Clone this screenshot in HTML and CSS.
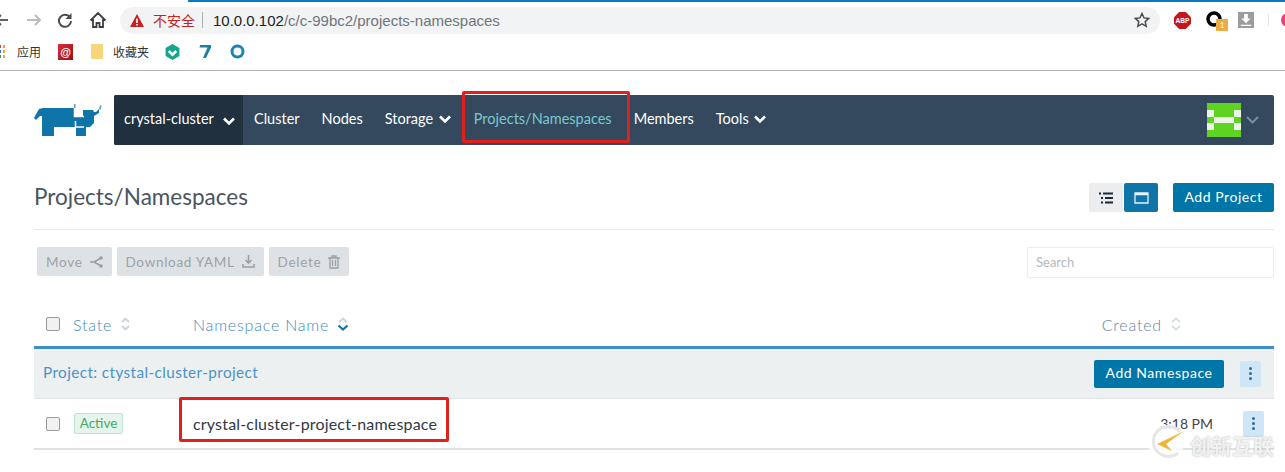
FILE: index.html
```html
<!DOCTYPE html>
<html lang="zh">
<head>
<meta charset="utf-8">
<title>Projects/Namespaces</title>
<link rel="stylesheet" href="styles.css">
</head>
<body>
<div class="loadbar"></div>
<header class="chrome">
  <div class="toolbar">
    <svg class="tb-back" width="8" height="16" viewBox="0 0 8 16"><path d="M-2 8H8M1 3l-5 5 5 5" fill="none" stroke="#5f6368" stroke-width="2"/></svg>
    <svg class="tb-fwd" width="16" height="16" viewBox="0 0 16 16"><path d="M1 8h13M9 3l5 5-5 5" fill="none" stroke="#b9bcc0" stroke-width="2"/></svg>
    <svg class="tb-reload" width="16" height="16" viewBox="0 0 16 16"><path d="M13 5.500A6 6 0 1 0 14 9" fill="none" stroke="#4a4d50" stroke-width="2"/><path d="M14.500 1v6h-6z" fill="#4a4d50"/></svg>
    <svg class="tb-home" width="18" height="18" viewBox="0 0 18 18"><path d="M1.500 9.500 9 2l7.500 7.500M4 8v8h3.500v-4h3v4H14V8" fill="none" stroke="#3c3f42" stroke-width="1.800"/></svg>
    <div class="omnibox">
      <svg class="warn" width="14" height="13" viewBox="0 0 14 13"><path d="M7 0l7 13H0z" fill="#c5221f"/><path d="M6.200 4.500h1.600v4.500H6.200zM6.200 10h1.600v1.500H6.200z" fill="#fff"/></svg>
      <span class="insecure">不安全</span>
      <span class="omni-sep"></span>
      <span class="url"><b>10.0.0.102</b>/c/c-99bc2/projects-namespaces</span>
      <svg class="star" width="16" height="16" viewBox="0 0 16 16"><path d="M8 1.500l2 4.400 4.800.5-3.600 3.200 1 4.700L8 11.900l-4.200 2.400 1-4.700L1.200 6.400 6 5.900z" fill="none" stroke="#4a4d50" stroke-width="1.500"/></svg>
    </div>
    <div class="ext">
      <svg width="17" height="17" viewBox="0 0 18 18"><path d="M5.500 0h7L18 5.500v7L12.500 18h-7L0 12.500v-7z" fill="#c4161c"/><text x="9" y="11.500" class="abp">ABP</text></svg>
      <div class="ext-o"><svg width="18" height="18" viewBox="0 0 18 18"><circle cx="8" cy="8" r="6" fill="none" stroke="#000" stroke-width="3.500"/></svg><span class="ext-badge">1</span></div>
      <svg width="16" height="16" viewBox="0 0 17 17"><rect width="17" height="17" fill="#9c9c9c"/><path d="M6.500 2h4v5h3l-5 5-5-5h3zM3 13.500h11V15H3z" fill="#fff"/></svg>
      <span class="ext-sep"></span>
      <span class="profile"></span>
    </div>
  </div>
  <div class="bookmarks">
    <span class="apps"><i></i><i></i><i></i><i></i><i></i><i></i></span>
    <span class="bm-label bm-apps">应用</span>
    <span class="bm-mail">@</span>
    <span class="bm-folder"></span>
    <span class="bm-label bm-fav">收藏夹</span>
    <svg class="bm-hex" width="15" height="16" viewBox="0 0 14 15"><path d="M7 0l6.500 3.700v7.600L7 15 .5 11.300V3.700z" fill="#15a589"/><path d="M3.500 6.500 7 10l3.500-3.500" fill="none" stroke="#fff" stroke-width="2.500"/></svg>
    <svg class="bm-seven" width="14" height="15" viewBox="0 0 14 15"><path d="M2 1h11v2.500L8 14H5l4.500-10.500H1.500z" fill="#1d7fa8"/></svg>
    <svg class="bm-ring" width="15" height="15" viewBox="0 0 15 15"><circle cx="7.500" cy="7.500" r="5.500" fill="none" stroke="#1c82ba" stroke-width="3"/></svg>
  </div>
</header>

<main class="page">
  <nav class="topnav">
    <svg class="logo" width="70" height="34" viewBox="0 0 70 34">
      <path d="M9 5H41V13H49V7H59L60 9H62L65 6V10L60 13V20L56 24H52V33H42V24H20V33H8V13H6L2 17 0 15 5 6Z" fill="#0f75a8"/>
      <path d="M40.500 0V13.500H50M41.500 18V24H50" fill="none" stroke="#fff" stroke-width="1.500"/>
      <path d="M40 1h1.500v4H40zM66 2l1.500 1-1 4-1.500-1z" fill="#5f9dbf"/>
    </svg>
    <div class="navbar">
      <div class="cluster">crystal-cluster <svg class="chev" width="14" height="9" viewBox="0 0 14 9"><path d="M2 1.500 7 6.500l5-5" fill="none" stroke="#fff" stroke-width="2.600"/></svg></div>
      <a class="navlink nl-cluster">Cluster</a>
      <a class="navlink">Nodes</a>
      <a class="navlink">Storage <svg class="chev" width="14" height="9" viewBox="0 0 14 9"><path d="M2 1.500 7 6.500l5-5" fill="none" stroke="#fff" stroke-width="2.600"/></svg></a>
      <a class="navlink active">Projects/Namespaces</a>
      <a class="navlink">Members</a>
      <a class="navlink">Tools <svg class="chev" width="14" height="9" viewBox="0 0 14 9"><path d="M2 1.500 7 6.500l5-5" fill="none" stroke="#fff" stroke-width="2.600"/></svg></a>
      <div class="user">
        <svg class="avatar" width="34" height="34" viewBox="0 0 34 34" shape-rendering="crispEdges"><rect width="34" height="34" fill="#5fd321"/><path d="M0 7h7v7H0zM27 7h7v7h-7zM0 20h7v7H0zM27 20h7v7h-7zM7 14h20v6H7z" fill="#eef3ea"/></svg>
        <svg width="13" height="8" viewBox="0 0 13 8"><path d="M1 1l5.500 5.500L12 1" fill="none" stroke="#7c8ba0" stroke-width="2"/></svg>
      </div>
    </div>
  </nav>

  <section class="titlebar">
    <h1>Projects/Namespaces</h1>
    <div class="title-actions">
      <div class="toggle">
        <span class="tg tg-off"><svg width="14" height="12" viewBox="0 0 14 12"><path d="M0 1.500h2M4 1.500h10M2 6h2M6 6h8M2 10.500h2M6 10.500h8" stroke="#1d2a36" stroke-width="2"/></svg></span>
        <span class="tg tg-on"><svg width="15" height="12" viewBox="0 0 15 12"><path d="M1 1h13v10H1zM1 2.500h13" fill="none" stroke="#e8f2f8" stroke-width="1.300"/></svg></span>
      </div>
      <button class="btn btn-primary">Add Project</button>
    </div>
  </section>

  <section class="actions">
    <div class="bulk">
      <button class="btn-dis">Move <svg width="13" height="12" viewBox="0 0 13 12"><path d="M0 6h5M4 6l7-4M4 6l7 4" fill="none" stroke="#96a0a7" stroke-width="1.500"/><circle cx="11" cy="2" r="1.800" fill="#96a0a7"/><circle cx="11" cy="10" r="1.800" fill="#96a0a7"/></svg></button>
      <button class="btn-dis">Download YAML <svg width="13" height="13" viewBox="0 0 13 13"><path d="M6.500 0v7M3.500 5l3 3 3-3M1 9v3h11V9" fill="none" stroke="#96a0a7" stroke-width="1.600"/></svg></button>
      <button class="btn-dis">Delete <svg width="12" height="14" viewBox="0 0 12 14"><path d="M0 3h12M4 3V1h4v2M2 3v10h8V3M4.500 5v6M7.500 5v6" fill="none" stroke="#96a0a7" stroke-width="1.300"/></svg></button>
    </div>
    <input class="search" type="text" placeholder="Search">
  </section>

  <section class="table">
    <div class="thead">
      <span class="check"></span>
      <span class="th th-state">State <svg class="sort" width="11" height="14" viewBox="0 0 11 14"><path d="M2 5 5.500 1.500 9 5M2 9 5.500 12.500 9 9" fill="none" stroke="#c6d5de" stroke-width="1.800"/></svg></span>
      <span class="th th-name">Namespace Name <svg class="sort" width="12" height="14" viewBox="0 0 12 14"><path d="M2.500 5 6 1.500 9.500 5" fill="none" stroke="#c6d5de" stroke-width="1.800"/><path d="M1.500 8.500 6 12.500l4.500-4" fill="none" stroke="#0f75a8" stroke-width="2.200"/></svg></span>
      <span class="th th-created">Created <svg class="sort" width="12" height="14" viewBox="0 0 12 14"><path d="M2 5 6 1.500 10 5M2 9 6 12.500 10 9" fill="none" stroke="#d5dde2" stroke-width="1.800"/></svg></span>
    </div>
    <div class="group">
      <span class="group-name">Project: ctystal-cluster-project</span>
      <button class="btn btn-small">Add Namespace</button>
      <span class="kebab kebab-group"><i></i><i></i><i></i></span>
    </div>
    <div class="row">
      <span class="check"></span>
      <span class="badge">Active</span>
      <span class="ns-name">crystal-cluster-project-namespace</span>
      <span class="time">3:18 PM</span>
      <span class="kebab kebab-row"><i></i><i></i><i></i></span>
    </div>
  </section>
</main>

<div class="mark mark-nav"></div>
<div class="mark mark-ns"></div>
<div class="watermark">
  <svg width="40" height="40" viewBox="0 0 40 40"><circle cx="18" cy="20" r="18" fill="#fff" fill-opacity=".75"/><path d="M32 9A15 15 0 1 0 30 30" fill="none" stroke="#e6e6e6" stroke-width="3"/><path d="M36 8 9 21l15 7-6-7z" fill="#f2b632"/></svg>
  <span class="wm-text">创新互联</span>
</div>
</body>
</html>
```
FILE: styles.css
```css
* { box-sizing: border-box; }
html, body { margin: 0; height: 472px; overflow: hidden; }
body { background: #fff; font-family: Lato, "Noto Sans CJK SC", sans-serif; color: #2e3a45; position: relative; }

.loadbar { position: absolute; top: 0; left: 188px; right: 0; height: 2px; background: #0b78c2; }

.chrome { height: 71px; border-bottom: 1px solid #b4b4b4; background: #fff; }
.toolbar { height: 36px; padding-top: 4px; display: flex; align-items: center; overflow: hidden; }
.tb-back { flex: none; margin-right: 18px; }
.tb-fwd { flex: none; margin-right: 15px; }
.tb-reload { flex: none; margin-right: 16px; }
.tb-home { flex: none; margin-right: 13px; }
.omnibox { flex: none; width: 1040px; height: 27px; padding: 0 10px; border-radius: 14px; background: #f1f3f4; display: flex; align-items: center; }
.warn { flex: none; }
.insecure { margin-left: 9px; font-size: 14px; color: #c5221f; }
.omni-sep { width: 1px; height: 16px; margin: 0 10px 0 7px; background: #a9adb1; }
.url { font-family: "Liberation Sans", sans-serif; font-size: 15px; color: #70757a; }
.url b { font-weight: 400; color: #202124; }
.star { margin-left: auto; }
.ext { flex: none; margin-left: 14px; display: flex; align-items: center; }
.ext > svg { flex: none; }
.abp { font: 700 7px "Liberation Sans", sans-serif; fill: #fff; text-anchor: middle; }
.ext-o { position: relative; flex: none; width: 18px; height: 18px; margin: 0 14px 0 15px; }
.ext-badge { position: absolute; left: 10px; top: 8px; width: 12px; height: 12px; background: #eeaa45; color: #fff; font-size: 8px; line-height: 12px; text-align: center; }
.ext-sep { flex: none; width: 1px; height: 12px; margin-left: 14px; background: #e4e4e4; }
.profile { flex: none; width: 14px; height: 14px; margin-left: 12px; border-radius: 50%; background: #e0457b; }

.bookmarks { height: 34px; padding-bottom: 3px; display: flex; align-items: center; }
.apps { width: 6px; display: grid; grid-template-columns: 2px 2px; gap: 2px; margin-right: 12px; margin-left: -1px; }
.apps i { width: 2px; height: 3px; background: #e8a33a; }
.apps i:nth-child(1) { background: #d9443a; }
.apps i:nth-child(3) { background: #3b78d8; }
.apps i:nth-child(5) { background: #3a9a4d; }
.bm-label { font-size: 12px; color: #333; }
.bm-mail { margin-left: 17px; width: 15px; height: 16px; background: linear-gradient(135deg, #d8303a, #981018); color: #fff; font: 700 11px/16px "Liberation Sans", sans-serif; text-align: center; }
.bm-folder { margin-left: 18px; width: 12px; height: 15px; border-radius: 1px; background: #f6d67a; }
.bm-fav { margin-left: 10px; }
.bm-hex { margin-left: 16px; }
.bm-seven { margin-left: 18px; }
.bm-ring { margin-left: 18px; }

.page { padding: 24px 11px 0 34px; }

.topnav { display: flex; align-items: center; height: 50px; }
.logo { flex: none; margin-right: 10px; }
.navbar { flex: 1; height: 50px; border-radius: 2px; background: #34495e; color: #fff; display: flex; align-items: center; font-size: 14.500px; }
.cluster { width: 129px; height: 50px; padding: 0 0 3px 10px; background: #21303e; display: flex; align-items: center; gap: 8px; border-radius: 2px 0 0 2px; white-space: nowrap; }
.cluster .chev { margin-top: 6px; }
.navlink { margin-right: 22px; padding-bottom: 3px; white-space: nowrap; }
.nl-cluster { margin-left: 11px; }
.navlink .chev { margin-left: 1px; }
.navlink.active { color: #78c9cf; }
.user { margin-left: auto; margin-right: 15px; display: flex; align-items: center; gap: 5px; }

.titlebar { height: 85px; padding-top: 35px; border-bottom: 1px solid #e9ebec; display: flex; justify-content: space-between; align-items: flex-start; }
h1 { margin: 0; font-size: 22.500px; line-height: 34px; font-weight: 400; color: #4a555f; }
.title-actions { display: flex; align-items: center; gap: 15px; margin-top: 3px; }
.toggle { display: flex; gap: 1px; }
.tg { width: 34px; height: 29px; display: flex; align-items: center; justify-content: center; border-radius: 2px; }
.tg-off { background: #ebedee; }
.tg-on { background: #0f75a8; }
.btn { border: 0; border-radius: 2px; background: #0075a8; color: #fff; font-family: Lato, sans-serif; letter-spacing: .55px; padding: 0 0 2px; }
.btn-primary { width: 101px; height: 29px; font-size: 14px; }

.actions { margin-top: 17px; padding-left: 3px; display: flex; justify-content: space-between; align-items: flex-start; }
.bulk { display: flex; gap: 5px; }
.btn-dis { height: 29px; padding: 0 9px; border: 0; border-radius: 2px; background: #dfe2e4; color: #9aa3a9; font-family: Lato, sans-serif; font-size: 13.500px; letter-spacing: .7px; display: flex; align-items: center; gap: 7px; }
.search { width: 247px; height: 31px; padding: 0 8px 2px; border: 1px solid #ebeded; border-radius: 2px; font-family: Lato, sans-serif; font-size: 13px; outline: 0; }
.search::placeholder { color: #b5b9bc; }

.table { margin-top: 25px; }
.thead { height: 46px; display: flex; align-items: center; font-size: 16px; font-weight: 300; letter-spacing: .8px; border-bottom: 3px solid #3d8fc6; padding-bottom: 1px; }
.check { flex: none; display: block; width: 14px; height: 14px; border: 1px solid #9a9a9a; border-radius: 2px; background: #f1f1f1; margin-left: 12px; }
.th { color: #4389b8; white-space: nowrap; display: inline-flex; align-items: center; gap: 8px; }
.th-state { margin-left: 13px; width: 120px; }
.th-created { margin-left: auto; margin-right: 92px; color: #64839b; }
.group { height: 50px; background: #ecf0f1; display: flex; align-items: center; padding: 0 13px 0 9px; border-bottom: 1px solid #e1e4e6; }
.group-name { padding-bottom: 4px; font-size: 15.300px; letter-spacing: .4px; color: #4d93c6; margin-right: auto; }
.btn-small { width: 130px; height: 28px; font-size: 14px; }
.kebab { flex: none; width: 21px; height: 26px; background: #cfe6f6; border-radius: 2px; display: flex; flex-direction: column; align-items: center; justify-content: center; gap: 2px; }
.kebab i { width: 3px; height: 3px; border-radius: 50%; background: #2f6c93; }
.kebab-group { margin-left: 16px; }
.row { height: 51px; display: flex; align-items: center; border-bottom: 2px solid #dfe2e4; padding-right: 10px; }
.badge { margin-left: 14px; width: 49px; height: 21px; border: 1px solid #bfe4cf; border-radius: 2px; background: #e6f5ec; color: #43a76d; font-size: 13.500px; line-height: 19px; text-align: center; }
.ns-name { margin-left: 70px; font-size: 16px; color: #2e3a45; letter-spacing: .18px; }
.time { margin-left: auto; font-size: 14px; line-height: 14px; color: #444; margin-right: 30px; }

.mark { position: absolute; border: 3px solid #e0201c; border-radius: 2px; pointer-events: none; }
.mark-nav { left: 462px; top: 91px; width: 168px; height: 52px; }
.mark-ns { left: 179px; top: 397px; width: 270px; height: 45px; }

.watermark { position: absolute; left: 1148px; top: 423px; height: 40px; display: flex; align-items: center; gap: 2px; color: #f1f1f1; text-shadow: 0 0 2px #b5b5b5; font-family: "Noto Sans CJK SC", sans-serif; font-size: 21px; font-weight: 700; pointer-events: none; }
.watermark svg { flex: none; }
.wm-text { line-height: 18px; margin-top: 3px; }
```
